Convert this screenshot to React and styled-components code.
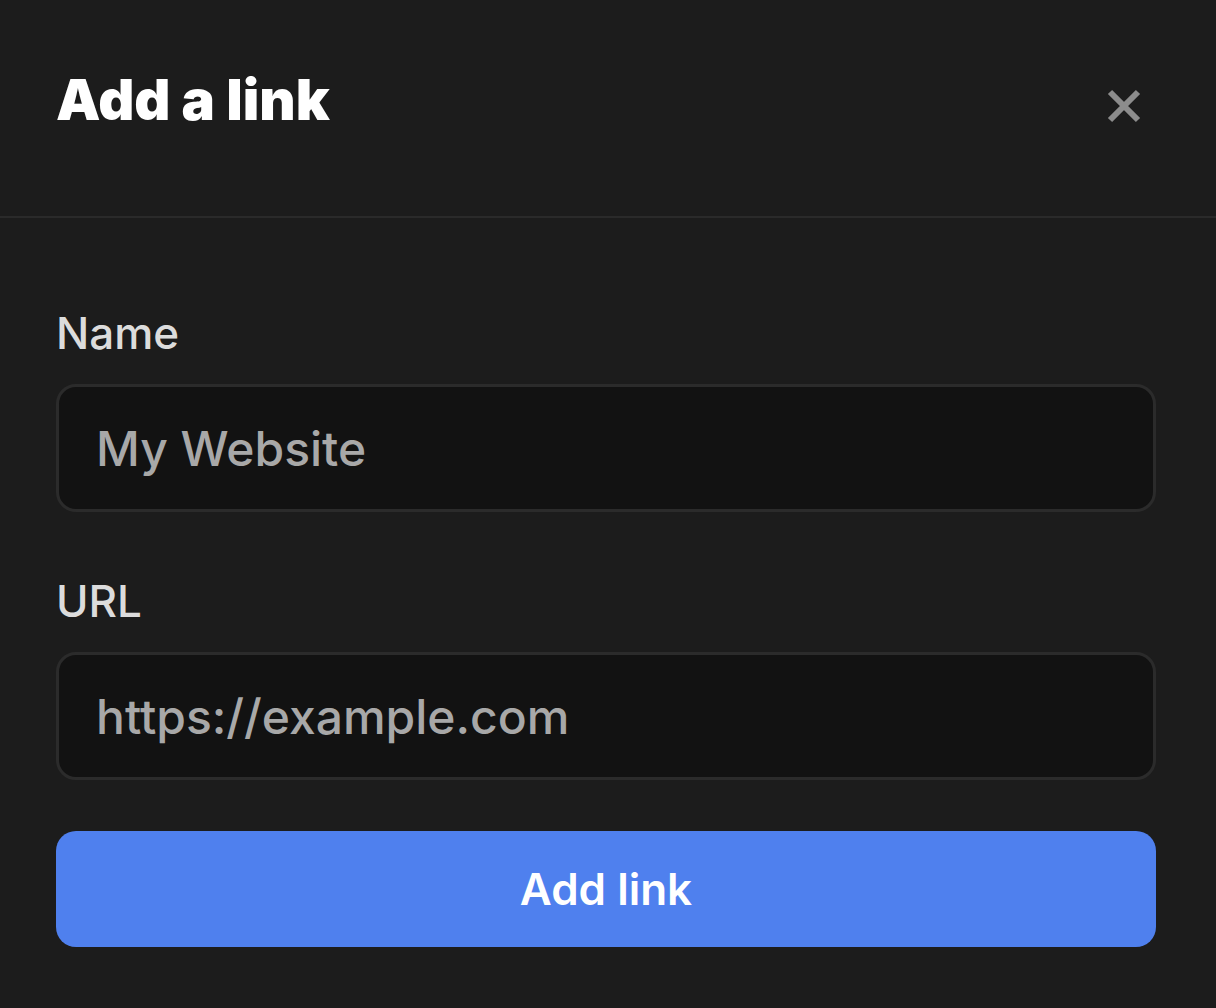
import React from 'react';
import styled, { createGlobalStyle } from 'styled-components';

const GlobalStyle = createGlobalStyle`
  html, body {
    margin: 0;
    padding: 0;
    background: #1c1c1c;
  }
  body {
    font-family: Inter, "Noto Sans", "Liberation Sans", sans-serif;
  }
`;

function CloseIcon() {
  return (
    <svg width="36" height="36" viewBox="0 0 36 36" fill="none">
      <path
        d="M4 4L32 32M32 4L4 32"
        stroke="#8c8c8c"
        strokeWidth="6"
        strokeLinecap="butt"
      />
    </svg>
  );
}

function App() {
  return (
    <>
      <GlobalStyle />
      <Sheet>
        <Header>
          <Title>Add a link</Title>
          <CloseButton aria-label='Close'>
            <CloseIcon />
          </CloseButton>
        </Header>
        <Body>
          <Field>
            <Label>Name</Label>
            <Input type='text' placeholder='My Website' />
          </Field>
          <Field>
            <Label>URL</Label>
            <Input type='text' placeholder='https://example.com' />
          </Field>
          <SubmitButton>Add link</SubmitButton>
        </Body>
      </Sheet>
    </>
  );
}

export default App;

const Sheet = styled.div`
  width: 1216px;
  height: 1008px;
  background: #1c1c1c;
  overflow: hidden;
`;

const Header = styled.div`
  display: flex;
  align-items: center;
  justify-content: space-between;
  height: 218px;
  padding: 0 74px 0 56px;
  box-sizing: border-box;
  border-bottom: 2px solid #2a2a2a;
`;

const Title = styled.h1`
  margin: 0 0 16px 0;
  font-size: 56px;
  font-weight: 900;
  color: #ffffff;
`;

const CloseButton = styled.button`
  display: flex;
  padding: 0;
  margin-bottom: 4px;
  border: none;
  background: none;
  cursor: pointer;
`;

const Body = styled.div`
  display: flex;
  flex-direction: column;
  padding: 90px 60px 0 56px;
`;

const Field = styled.div`
  display: flex;
  flex-direction: column;
  margin-bottom: 64px;
  &:nth-of-type(2) {
    margin-bottom: 51px;
  }
`;

const Label = styled.label`
  margin-bottom: 26px;
  font-size: 44px;
  font-weight: 500;
  line-height: 50px;
  color: #dcdcdc;
`;

const Input = styled.input`
  box-sizing: border-box;
  width: 100%;
  height: 128px;
  padding: 0 37px;
  border: 3px solid #2b2b2b;
  border-radius: 20px;
  background: #121212;
  font-family: inherit;
  font-size: 48px;
  font-weight: 500;
  color: #ffffff;
  outline: none;
  &::placeholder {
    color: #a8a8a8;
  }
`;

const SubmitButton = styled.button`
  height: 116px;
  border: none;
  border-radius: 20px;
  background: #4f80ee;
  font-family: inherit;
  font-size: 44px;
  font-weight: 600;
  color: #ffffff;
  cursor: pointer;
`;
